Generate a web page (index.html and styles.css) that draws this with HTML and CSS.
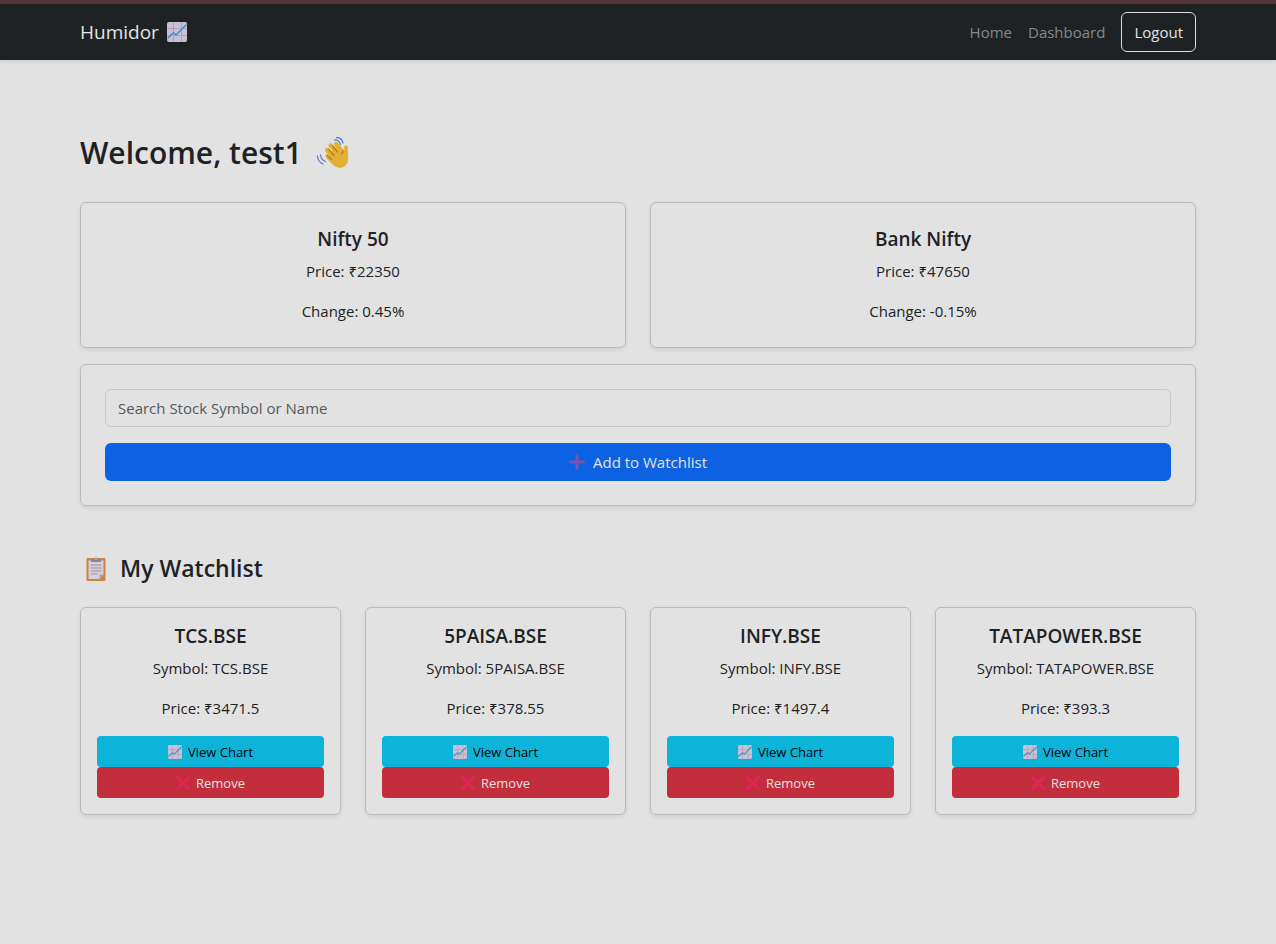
FILE: index.html
```html
<!DOCTYPE html>
<html lang="en">
<head>
<meta charset="utf-8">
<meta name="viewport" content="width=device-width, initial-scale=1">
<title>Humidor</title>
<link rel="stylesheet" href="styles.css">
</head>
<body>
<svg class="sprite" aria-hidden="true">
  <symbol id="chart" viewBox="0 0 20 20">
    <rect width="20" height="20" rx="2" fill="#cbc0d3"/>
    <path d="M0 6.5h20M0 13.5h20M6.5 0v20M14.5 0v20" stroke="#aea3b5" stroke-width="1" fill="none"/>
    <path d="M0.5 16.5L5.5 11.5Q6.500 10.500 7.500 11.500L9 13L19.500 2.500" stroke="#3092d2" stroke-width="1.500" fill="none"/>
  </symbol>
  <symbol id="cross" viewBox="0 0 14 14">
    <path d="M1.500 1.500L12.500 12.500M12.500 1.500L1.500 12.500" stroke="#e3265a" stroke-width="2.800" stroke-linecap="round"/>
  </symbol>
  <symbol id="plus" viewBox="0 0 16 16">
    <path d="M8 1.500v13M1.500 8h13" stroke="#7b52ad" stroke-width="3" stroke-linecap="round"/>
  </symbol>
  <symbol id="clipboard" viewBox="0 0 20 24">
    <rect x="0.500" y="1" width="19" height="23" rx="1.500" fill="#c98440"/>
    <path d="M2.500 3.500h15v14l-4 4.500h-11z" fill="#d6d0dc"/>
    <path d="M17.500 17.500l-4 4.500v-4.500z" fill="#aaa2b2"/>
    <path d="M5 2.500h2.500Q8 0.500 10 0.500T12.500 2.500H15V5H5z" fill="#8d8792"/>
    <circle cx="10" cy="2" r="0.800" fill="#d6d0dc"/>
    <path d="M4.500 8h11M4.500 11h11M4.500 14h11M4.500 17h7" stroke="#9b94a4" stroke-width="1"/>
  </symbol>
  <symbol id="wave" viewBox="0 0 34 34">
    <g stroke="#e3b036" stroke-linecap="round" fill="none">
      <path d="M12 20L20 28" stroke-width="4.500"/>
      <path d="M11 14L19 23" stroke-width="4.200"/>
      <path d="M14.500 9.500L24 19" stroke-width="4.200"/>
      <path d="M20 8L27 16" stroke-width="4.200"/>
      <path d="M30 11L30.500 22" stroke-width="3.600"/>
    </g>
    <path d="M12 18L22 10L28 15L31 17Q34 26 29 30Q23 34.500 17 29L10 21.500z" fill="#e3b036"/>
    <path d="M11 19.500L15.500 23.500M12.500 13L18 19.500M16.500 10L21.500 16M27 14.500Q27 16.500 25.500 18" stroke="#bb7a22" stroke-width="1.200" fill="none" stroke-linecap="round"/>
    <path d="M18.500 4Q23 3.500 24.500 8.500M20.500 1.500Q26 1.500 27 7M4.500 19Q5 24 9.500 25.500M1.500 20Q2 26 7 28" stroke="#4d86df" stroke-width="1.300" fill="none" stroke-linecap="round"/>
  </symbol>
</svg>

<header class="navbar">
  <nav class="container navbar-inner" aria-label="Main">
    <a class="brand" href="#">Humidor <svg class="icon-brand" aria-hidden="true"><use href="#chart"/></svg></a>
    <div class="nav-links">
      <a class="nav-link" href="#">Home</a>
      <a class="nav-link" href="#">Dashboard</a>
      <button class="logout" type="button">Logout</button>
    </div>
  </nav>
</header>

<main class="container main">
  <h1 class="welcome">Welcome, test1 <svg class="icon-wave" aria-hidden="true"><use href="#wave"/></svg></h1>

  <section class="indices" aria-label="Indices">
    <article class="card card-roomy">
      <h2 class="card-title">Nifty 50</h2>
      <p class="card-text">Price: ₹22350</p>
      <p class="card-text">Change: 0.45%</p>
    </article>
    <article class="card card-roomy">
      <h2 class="card-title">Bank Nifty</h2>
      <p class="card-text">Price: ₹47650</p>
      <p class="card-text">Change: -0.15%</p>
    </article>
  </section>

  <form class="card card-roomy search">
    <input class="search-input" type="text" aria-label="Search Stock Symbol or Name" placeholder="Search Stock Symbol or Name">
    <button class="btn-add" type="button"><svg class="icon-plus" aria-hidden="true"><use href="#plus"/></svg>Add to Watchlist</button>
  </form>

  <h2 class="section-title"><svg class="icon-clipboard" aria-hidden="true"><use href="#clipboard"/></svg>My Watchlist</h2>

  <section class="watchlist" aria-label="My Watchlist">
    <article class="card">
      <h3 class="card-title">TCS.BSE</h3>
      <p class="card-text">Symbol: TCS.BSE</p>
      <p class="card-text">Price: ₹3471.5</p>
      <div class="actions">
        <button class="btn btn-view" type="button"><svg class="icon-small" aria-hidden="true"><use href="#chart"/></svg>View Chart</button>
        <button class="btn btn-remove" type="button"><svg class="icon-small" aria-hidden="true"><use href="#cross"/></svg>Remove</button>
      </div>
    </article>
    <article class="card">
      <h3 class="card-title">5PAISA.BSE</h3>
      <p class="card-text">Symbol: 5PAISA.BSE</p>
      <p class="card-text">Price: ₹378.55</p>
      <div class="actions">
        <button class="btn btn-view" type="button"><svg class="icon-small" aria-hidden="true"><use href="#chart"/></svg>View Chart</button>
        <button class="btn btn-remove" type="button"><svg class="icon-small" aria-hidden="true"><use href="#cross"/></svg>Remove</button>
      </div>
    </article>
    <article class="card">
      <h3 class="card-title">INFY.BSE</h3>
      <p class="card-text">Symbol: INFY.BSE</p>
      <p class="card-text">Price: ₹1497.4</p>
      <div class="actions">
        <button class="btn btn-view" type="button"><svg class="icon-small" aria-hidden="true"><use href="#chart"/></svg>View Chart</button>
        <button class="btn btn-remove" type="button"><svg class="icon-small" aria-hidden="true"><use href="#cross"/></svg>Remove</button>
      </div>
    </article>
    <article class="card">
      <h3 class="card-title">TATAPOWER.BSE</h3>
      <p class="card-text">Symbol: TATAPOWER.BSE</p>
      <p class="card-text">Price: ₹393.3</p>
      <div class="actions">
        <button class="btn btn-view" type="button"><svg class="icon-small" aria-hidden="true"><use href="#chart"/></svg>View Chart</button>
        <button class="btn btn-remove" type="button"><svg class="icon-small" aria-hidden="true"><use href="#cross"/></svg>Remove</button>
      </div>
    </article>
  </section>
</main>
</body>
</html>
```

FILE: styles.css
```css
* { box-sizing: border-box; }

body {
  margin: 0;
  background: #e2e2e2;
  color: #1e2225;
  font-family: "Segoe UI", "Open Sans", "Noto Sans", sans-serif;
  font-size: 15px;
  line-height: 24px;
}

h1, h2, h3, p { margin: 0; }
button, input { font: inherit; }
button { cursor: pointer; }
.sprite { display: none; }

.container {
  width: 100%;
  max-width: 1140px;
  margin: 0 auto;
  padding-left: 12px;
  padding-right: 12px;
}

.navbar {
  background: #1e2225;
  border-top: 4px solid #55353a;
  background-clip: padding-box;
  box-shadow: 0 2px 4px rgba(0, 0, 0, 0.08);
}
.navbar-inner {
  display: flex;
  align-items: center;
  justify-content: space-between;
  padding-top: 8px;
  padding-bottom: 8px;
}
.brand {
  display: flex;
  align-items: center;
  gap: 8px;
  color: #e2e2e2;
  font-size: 19px;
  text-decoration: none;
}
.nav-links {
  display: flex;
  align-items: center;
  gap: 16px;
}
.nav-link {
  color: #85888a;
  text-decoration: none;
}
.logout {
  padding: 7px 12px;
  border: 1px solid #dcdddf;
  border-radius: 6px;
  background: transparent;
  color: #e2e2e2;
}

.main { padding-top: 74px; padding-bottom: 48px; }

.welcome {
  display: flex;
  align-items: center;
  gap: 14px;
  margin-bottom: 30px;
  font-size: 30px;
  font-weight: 600;
  line-height: 38px;
}

.card {
  padding: 16px;
  border: 1px solid #bababc;
  border-radius: 6px;
  box-shadow: 0 2px 4px rgba(0, 0, 0, 0.08);
  text-align: center;
}
.card-roomy { padding: 24px; }
.card-title {
  margin-bottom: 8px;
  font-size: 19px;
  font-weight: 600;
  line-height: 24px;
}
.card-text + .card-text { margin-top: 16px; }

.indices {
  display: grid;
  grid-template-columns: repeat(2, 1fr);
  gap: 24px;
  margin-bottom: 16px;
}

.search {
  display: flex;
  flex-direction: column;
  gap: 16px;
}
.search-input {
  width: 100%;
  height: 38px;
  padding: 6px 12px;
  border: 1px solid #c5c8cd;
  border-radius: 6px;
  background: transparent;
  color: #1e2225;
}
.search-input::placeholder { color: #55595e; opacity: 1; }
.btn-add {
  display: flex;
  align-items: center;
  justify-content: center;
  gap: 8px;
  height: 38px;
  border: 0;
  border-radius: 6px;
  background: #0c62e2;
  color: #e2e2e2;
}

.section-title {
  display: flex;
  align-items: center;
  gap: 14px;
  margin: 48px 0 24px;
  padding-left: 6px;
  font-size: 23px;
  font-weight: 600;
  line-height: 29px;
}

.watchlist {
  display: grid;
  grid-template-columns: repeat(4, 1fr);
  gap: 24px;
}
.actions {
  display: flex;
  flex-direction: column;
  margin-top: 16px;
}
.btn {
  display: flex;
  align-items: center;
  justify-content: center;
  gap: 6px;
  height: 31px;
  border: 0;
  border-radius: 4px;
  font-size: 13px;
}
.btn-view { background: #0bb4d8; color: #000; }
.btn-remove { background: #c32e3c; color: #e2e2e2; }

.icon-brand { width: 20px; height: 20px; }
.icon-wave { width: 34px; height: 34px; }
.icon-plus { width: 16px; height: 16px; }
.icon-clipboard { width: 20px; height: 24px; }
.icon-small { width: 14px; height: 14px; }
```
